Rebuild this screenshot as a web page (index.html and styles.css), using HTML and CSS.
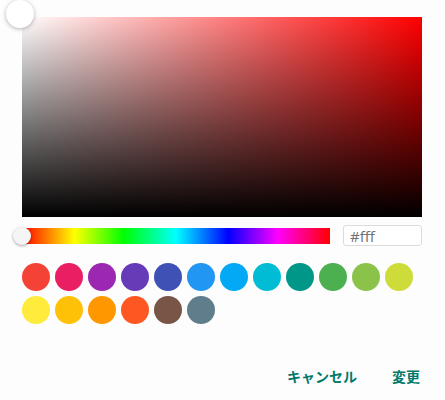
FILE: index.html
```html
<!DOCTYPE html>
<html lang="ja">
<head>
    <meta charset="UTF-8">
    <meta name="viewport" content="width=device-width, initial-scale=1.0">
    <title>色の選択</title>
    <link rel="stylesheet" href="styles.css">
</head>
<body>
    <div class="picker">
        <div class="sat-area">
            <div class="sat-white"></div>
            <div class="sat-black"></div>
        </div>
        <span class="sat-knob"></span>

        <div class="hue-row">
            <div class="hue-bar">
                <span class="hue-thumb"></span>
            </div>
            <input class="hex-input" type="text" value="#fff">
        </div>

        <div class="swatches">
            <span class="swatch" style="background:#f44336"></span>
            <span class="swatch" style="background:#e91e63"></span>
            <span class="swatch" style="background:#9c27b0"></span>
            <span class="swatch" style="background:#673ab7"></span>
            <span class="swatch" style="background:#3f51b5"></span>
            <span class="swatch" style="background:#2196f3"></span>
            <span class="swatch" style="background:#03a9f4"></span>
            <span class="swatch" style="background:#00bcd4"></span>
            <span class="swatch" style="background:#009688"></span>
            <span class="swatch" style="background:#4caf50"></span>
            <span class="swatch" style="background:#8bc34a"></span>
            <span class="swatch" style="background:#cddc39"></span>
            <span class="swatch" style="background:#ffeb3b"></span>
            <span class="swatch" style="background:#ffc107"></span>
            <span class="swatch" style="background:#ff9800"></span>
            <span class="swatch" style="background:#ff5722"></span>
            <span class="swatch" style="background:#795548"></span>
            <span class="swatch" style="background:#607d8b"></span>
        </div>

        <div class="actions">
            <button class="text-btn">キャンセル</button>
            <button class="text-btn">変更</button>
        </div>
    </div>
</body>
</html>
```

FILE: styles.css
```css
body {
    margin: 0;
    background-color: #fdfdfd;
    font-family: "Noto Sans CJK JP", "Noto Sans", sans-serif;
}
.picker {
    position: relative;
    padding: 17px 23px 0 22px;
}
.sat-area {
    position: relative;
    width: 400px;
    height: 200px;
    background-color: #ff0000;
}
.sat-white,
.sat-black {
    position: absolute;
    inset: 0;
}
.sat-white {
    background: linear-gradient(to right, #fff, rgba(255, 255, 255, 0));
}
.sat-black {
    background: linear-gradient(to bottom, rgba(0, 0, 0, 0), #000);
}
.sat-knob {
    position: absolute;
    left: 6px;
    top: 0;
    width: 28px;
    height: 28px;
    border-radius: 50%;
    background: #fff;
    box-shadow: 0 1px 4px rgba(0, 0, 0, 0.3);
}
.hue-row {
    display: flex;
    align-items: center;
    justify-content: space-between;
    margin-top: 8px;
    width: 400px;
}
.hue-bar {
    position: relative;
    width: 308px;
    height: 16px;
    background: linear-gradient(to right, #f00 0%, #ff0 17%, #0f0 33%, #0ff 50%, #00f 67%, #f0f 83%, #f00 100%);
}
.hue-thumb {
    position: absolute;
    left: -9px;
    top: -1px;
    width: 18px;
    height: 18px;
    border-radius: 50%;
    background: #f5f5f5;
    box-shadow: 0 1px 3px rgba(0, 0, 0, 0.35);
}
.hex-input {
    box-sizing: border-box;
    width: 79px;
    height: 21px;
    padding: 0 6px;
    border: 1px solid #dcdcdc;
    border-radius: 3px;
    background: #fff;
    color: #707070;
    font-family: "Open Sans", sans-serif;
    font-size: 15px;
}
.swatches {
    display: flex;
    flex-wrap: wrap;
    gap: 5px;
    width: 400px;
    margin-top: 17px;
}
.swatch {
    width: 28px;
    height: 28px;
    border-radius: 50%;
}
.actions {
    display: flex;
    justify-content: flex-end;
    gap: 19px;
    width: 406px;
    margin-top: 38px;
}
.text-btn {
    padding: 4px 8px;
    border: none;
    background: none;
    color: #00796b;
    font-family: "Noto Sans CJK JP", sans-serif;
    font-size: 14px;
    font-weight: bold;
    cursor: pointer;
}
```
